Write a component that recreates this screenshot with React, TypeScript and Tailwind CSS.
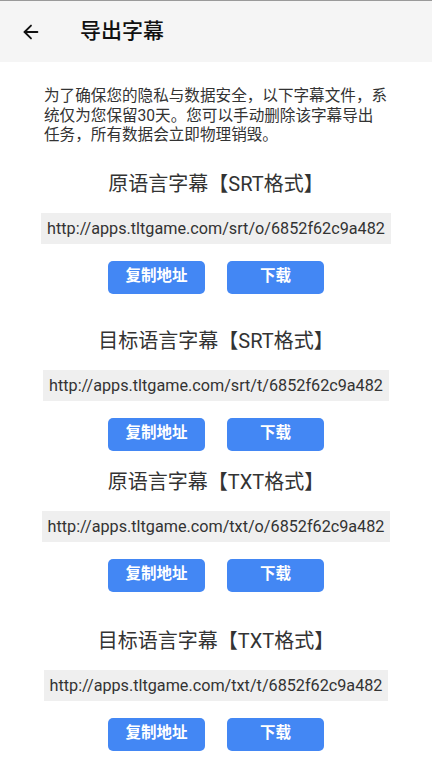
import { ArrowLeft } from 'lucide-react';

interface ExportItem {
  title: string;
  url: string;
  spacing: string;
}

const items: ExportItem[] = [
  { title: '原语言字幕【SRT格式】', url: 'http://apps.tltgame.com/srt/o/6852f62c9a482', spacing: 'mt-[24px]' },
  { title: '目标语言字幕【SRT格式】', url: 'http://apps.tltgame.com/srt/t/6852f62c9a482', spacing: 'mt-[33px]' },
  { title: '原语言字幕【TXT格式】', url: 'http://apps.tltgame.com/txt/o/6852f62c9a482', spacing: 'mt-[17px]' },
  { title: '目标语言字幕【TXT格式】', url: 'http://apps.tltgame.com/txt/t/6852f62c9a482', spacing: 'mt-[35px]' },
];

function ExportSection({ title, url, spacing }: ExportItem) {
  return (
    <div className={`flex flex-col items-center ${spacing}`}>
      <div className="h-[28px] leading-[28px] text-[20px] text-[#333]">{title}</div>
      <div className="mt-[15px] h-[31px] leading-[31px] px-[6px] bg-[#efefef] text-[16.2px] text-[#333]">
        {url}
      </div>
      <div className="mt-[17px] flex gap-[22px]">
        <button className="w-[97px] h-[33px] rounded-[5px] bg-[#4387f4] text-white text-[15.5px] font-bold">
          复制地址
        </button>
        <button className="w-[97px] h-[33px] rounded-[5px] bg-[#4387f4] text-white text-[15.5px] font-bold">
          下载
        </button>
      </div>
    </div>
  );
}

export default function App() {
  return (
    <div
      className="w-[432px] min-h-[768px] bg-white"
      style={{ fontFamily: 'Roboto, "Noto Sans CJK SC", sans-serif' }}
    >
      <div className="h-[62px] bg-[#f5f5f5] border-t border-[#9a9a9a] flex items-center">
        <ArrowLeft className="ml-[20px] w-[22px] h-[22px] text-[#111]" strokeWidth={2} />
        <span className="ml-[38px] text-[21px] font-medium text-[#111]">导出字幕</span>
      </div>
      <p className="mt-[25px] px-[44px] text-[15.6px] leading-[19.5px] text-[#333]">
        为了确保您的隐私与数据安全，以下字幕文件，系统仅为您保留30天。您可以手动删除该字幕导出任务，所有数据会立即物理销毁。
      </p>
      {items.map((item) => (
        <ExportSection key={item.url} {...item} />
      ))}
    </div>
  );
}
